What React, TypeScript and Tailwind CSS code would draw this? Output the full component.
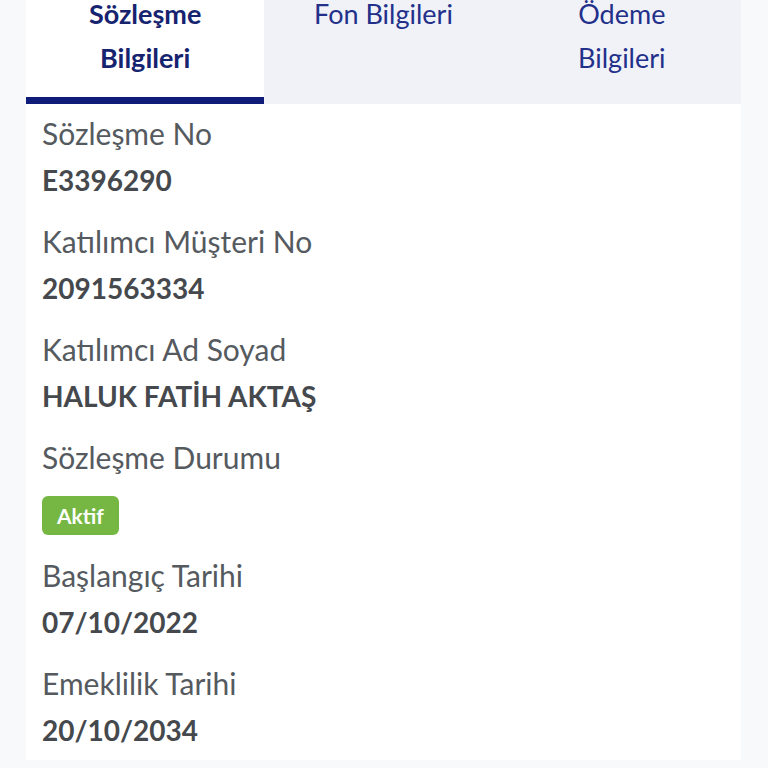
import React from 'react';

const rows = [
  { label: 'Sözleşme No', value: 'E3396290' },
  { label: 'Katılımcı Müşteri No', value: '2091563334' },
  { label: 'Katılımcı Ad Soyad', value: 'HALUK FATİH AKTAŞ' },
];

const dates = [
  { label: 'Başlangıç Tarihi', value: '07/10/2022' },
  { label: 'Emeklilik Tarihi', value: '20/10/2034' },
];

const tabs = [
  { title: ['Sözleşme', 'Bilgileri'], active: true },
  { title: ['Fon Bilgileri'], active: false },
  { title: ['Ödeme', 'Bilgileri'], active: false },
];

function Field({ label, value }: { label: string; value: string }) {
  return (
    <div className="mb-[14px]">
      <div className="text-[30px] leading-[47px] text-[#555a5f]">{label}</div>
      <div className="text-[28px] leading-[47px] font-bold text-[#45494d]">{value}</div>
    </div>
  );
}

export default function App() {
  return (
    <div
      className="w-[768px] h-[768px] overflow-hidden bg-[#f8f9fb] px-[26px]"
      style={{ fontFamily: 'Lato, "Noto Sans", sans-serif' }}
    >
      <div className="w-[715px] bg-white min-h-full">
        {/* Tabs */}
        <div className="grid grid-cols-3 -mt-[8px]">
          {tabs.map((tab, i) => (
            <div
              key={i}
              className={`h-[112px] flex flex-col items-center text-[27px] leading-[44px] ${
                tab.active
                  ? 'bg-white font-bold text-[#16236f] border-b-[7px] border-[#0f1c7a]'
                  : 'bg-[#f0f2f8] text-[#23308a]'
              }`}
            >
              {tab.title.map((t) => (
                <span key={t}>{t}</span>
              ))}
            </div>
          ))}
        </div>

        {/* Details */}
        <div className="px-[16px] pt-[6px]">
          {rows.map((r) => (
            <Field key={r.label} {...r} />
          ))}
          <div className="mb-[17px]">
            <div className="text-[30px] leading-[47px] text-[#555a5f]">Sözleşme Durumu</div>
            <div className="pt-[15px]">
              <span className="inline-flex items-center h-[39px] px-[15px] rounded-[6px] bg-[#76b743] text-white font-bold text-[21px]">
                Aktif
              </span>
            </div>
          </div>
          {dates.map((r) => (
            <Field key={r.label} {...r} />
          ))}
        </div>
      </div>
    </div>
  );
}
